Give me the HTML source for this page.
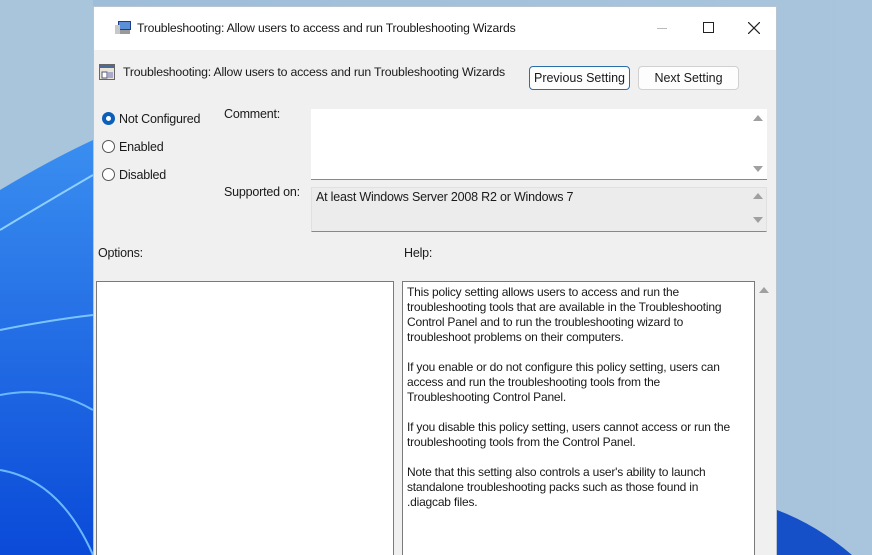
<!DOCTYPE html>
<html style="width:872px;height:555px;overflow:hidden"><head><meta charset="utf-8"><style>
*{margin:0;padding:0;box-sizing:border-box}
body{width:872px;height:555px;overflow:hidden;position:relative;font-family:"Liberation Sans",sans-serif;font-size:12px;color:#1a1a1a;
background:linear-gradient(90deg,#9dbcd8 0%,#a9c5dd 100%)}
.a{position:absolute}
.t{white-space:nowrap;letter-spacing:-0.2px}
.arr{position:absolute;width:0;height:0;border-left:5px solid transparent;border-right:5px solid transparent}
.up{border-bottom:6px solid #a0a0a0}.dn{border-top:6px solid #a0a0a0}
.radio{position:absolute;width:13px;height:13px;border:1px solid #555;border-radius:50%;background:#fff}
.btn{position:absolute;height:24px;border:1px solid #d0d0d0;border-radius:4px;background:#fdfdfd;text-align:center;line-height:22px;font-size:12.5px}
</style></head><body>
<svg class="a" style="left:0;top:0" width="93" height="555">
<defs><linearGradient id="g1" x1="0" y1="0" x2="0" y2="1"><stop offset="0" stop-color="#3a8ef0"/><stop offset="1" stop-color="#0a4ad8"/></linearGradient></defs>
<rect width="93" height="555" fill="#a9c5dc"/>
<path d="M0 190 Q50 160 93 140 L93 555 L0 555Z" fill="url(#g1)"/>
<path d="M0 230 Q50 200 93 175" stroke="#8fd0ff" stroke-width="2" fill="none"/>
<path d="M0 330 Q50 320 93 315" stroke="#7cc4ff" stroke-width="2" fill="none"/>
<path d="M0 395 Q50 385 93 410" stroke="#6ab8ff" stroke-width="2" fill="none"/>
<path d="M0 470 Q60 480 93 555" stroke="#6ab8ff" stroke-width="2" fill="none"/>
</svg>
<svg class="a" style="left:777px;top:470px" width="95" height="85"><path d="M0 40 Q40 55 75 85 L0 85Z" fill="#1550c8"/></svg>
<div class="a" style="left:93px;top:6px;width:684px;height:549px;background:#f0f0f0;border:1px solid #b8c4d0;border-bottom:none"></div>
<div class="a" style="left:94px;top:7px;width:682px;height:43px;background:#fff"></div>
<svg class="a" style="left:115px;top:20px" width="18" height="16"><rect x="3" y="1" width="13" height="9" fill="#1c3e8a"/><rect x="4" y="2" width="11" height="7" fill="#5b8fd8"/><rect x="1" y="10" width="14" height="4" fill="#999"/><rect x="0" y="5" width="5" height="9" fill="#c8c8c8"/></svg>
<div class="a t" style="left:137px;top:21px;font-size:12.2px">Troubleshooting: Allow users to access and run Troubleshooting Wizards</div>
<div class="a" style="left:657px;top:28px;width:10px;height:1px;background:#bbb"></div>
<div class="a" style="left:703px;top:22px;width:11px;height:11px;border:1px solid #222"></div>
<svg class="a" style="left:748px;top:22px" width="12" height="12"><path d="M0 0L12 12M12 0L0 12" stroke="#222" stroke-width="1.2"/></svg>
<svg class="a" style="left:99px;top:64px" width="16" height="16"><rect x="0.5" y="0.5" width="15" height="15" fill="#e8e4d8" stroke="#666"/><rect x="1" y="1" width="14" height="3" fill="#4a6a9a"/><rect x="3" y="8" width="5" height="6" fill="#fff" stroke="#557"/><rect x="9" y="8" width="5" height="6" fill="#aac" /></svg>
<div class="a t" style="left:123px;top:65px;font-size:12.3px">Troubleshooting: Allow users to access and run Troubleshooting Wizards</div>
<div class="btn" style="left:529px;top:66px;width:101px;border:1px solid #2a6fa8">Previous Setting</div>
<div class="btn" style="left:638px;top:66px;width:101px">Next Setting</div>
<div class="radio" style="left:102px;top:112px;border:4px solid #0c5fb8"></div>
<div class="a t" style="left:119px;top:112px;font-size:12.5px">Not Configured</div>
<div class="radio" style="left:102px;top:140px"></div>
<div class="a t" style="left:119px;top:140px;font-size:12.5px">Enabled</div>
<div class="radio" style="left:102px;top:168px"></div>
<div class="a t" style="left:119px;top:168px;font-size:12.5px">Disabled</div>
<div class="a t" style="left:224px;top:107px;font-size:12.5px">Comment:</div>
<div class="a t" style="left:224px;top:185px;font-size:12.5px">Supported on:</div>
<div class="a" style="left:311px;top:109px;width:456px;height:71px;background:#fff;border-bottom:1px solid #888"></div>
<div class="arr up" style="left:753px;top:115px"></div><div class="arr dn" style="left:753px;top:166px"></div>
<div class="a" style="left:311px;top:187px;width:456px;height:45px;background:#ececec;border:1px solid #e0e0e0;border-bottom:1px solid #888"></div>
<div class="a t" style="left:316px;top:190px;font-size:12.5px">At least Windows Server 2008 R2 or Windows 7</div>
<div class="arr up" style="left:753px;top:193px"></div><div class="arr dn" style="left:753px;top:217px"></div>
<div class="a t" style="left:98px;top:246px;font-size:12.5px">Options:</div>
<div class="a t" style="left:404px;top:246px;font-size:12.5px">Help:</div>
<div class="a" style="left:96px;top:281px;width:298px;height:280px;background:#fff;border:1px solid #7a7a7a"></div>
<div class="a" style="left:402px;top:281px;width:353px;height:280px;background:#fff;border:1px solid #7a7a7a"></div>
<div class="arr up" style="left:759px;top:287px"></div>
<div class="a" style="left:407px;top:285px;width:336px;line-height:15px;font-size:12px;letter-spacing:-0.2px">
This policy setting allows users to access and run the troubleshooting tools that are available in the Troubleshooting Control Panel and to run the troubleshooting wizard to troubleshoot problems on their computers.<br><br>
If you enable or do not configure this policy setting, users can access and run the troubleshooting tools from the Troubleshooting Control Panel.<br><br>
If you disable this policy setting, users cannot access or run the troubleshooting tools from the Control Panel.<br><br>
Note that this setting also controls a user's ability to launch standalone troubleshooting packs such as those found in .diagcab files.</div>
</body></html>
